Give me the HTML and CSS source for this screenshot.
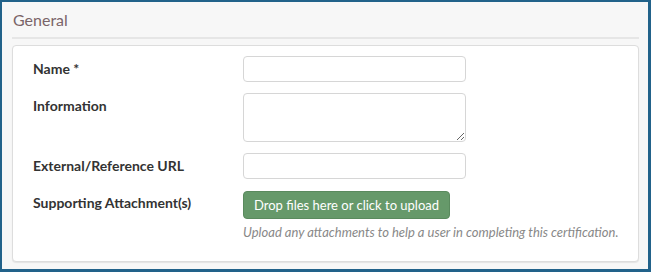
FILE: index.html
```html
<!DOCTYPE html>
<html lang="en">
<head>
    <meta charset="UTF-8">
    <title>General</title>
    <link rel="stylesheet" href="styles.css">
</head>
<body>
    <div class="frame">
        <!-- Section header -->
        <div class="section-title">General</div>

        <!-- Form card -->
        <div class="card">
            <div class="form-row">
                <label class="form-label">Name *</label>
                <input class="form-input" type="text">
            </div>
            <div class="form-row">
                <label class="form-label">Information</label>
                <textarea class="form-input form-textarea"></textarea>
            </div>
            <div class="form-row">
                <label class="form-label">External/Reference URL</label>
                <input class="form-input" type="text">
            </div>
            <div class="form-row">
                <label class="form-label">Supporting Attachment(s)</label>
                <div class="upload">
                    <button class="upload-btn">Drop files here or click to upload</button>
                    <p class="help-text">Upload any attachments to help a user in completing this certification.</p>
                </div>
            </div>
        </div>
    </div>
</body>
</html>
```

FILE: styles.css
```css
body {
    margin: 0;
    padding: 0;
    font-family: Lato, 'Noto Sans', sans-serif;
    background-color: #ffffff;
}

/* Outer frame */
.frame {
    width: 651px;
    height: 272px;
    box-sizing: border-box;
    border-style: solid;
    border-color: #22628a;
    border-width: 2px 3px 3px 2px;
    background-color: #f7f7f7;
    padding: 0 9px 0 10px;
}

/* Section header */
.section-title {
    color: #7a6468;
    font-size: 16px;
    height: 35px;
    line-height: 36px;
    padding-left: 1px;
    border-bottom: 2px solid #e6e6e6;
}

/* Card */
.card {
    background-color: #ffffff;
    border: 1px solid #dddddd;
    border-radius: 4px;
    box-shadow: 0 1px 1px rgba(0, 0, 0, 0.08);
    margin-top: 6px;
    height: 217px;
    box-sizing: border-box;
    padding: 10px 0 0 20px;
}

.form-row {
    display: flex;
    align-items: flex-start;
    margin-bottom: 11px;
}

.form-label {
    width: 210px;
    font-size: 14px;
    font-weight: bold;
    color: #333333;
    padding-top: 4px;
}

.form-input {
    width: 223px;
    height: 26px;
    box-sizing: border-box;
    border: 1px solid #d6d6d6;
    border-radius: 4px;
    margin: 0;
    font-family: inherit;
}

.form-textarea {
    height: 49px;
    resize: vertical;
    display: block;
}

/* Upload */
.upload {
    display: flex;
    flex-direction: column;
}

.upload-btn {
    align-self: flex-start;
    background-color: #66996a;
    color: #ffffff;
    border: 1px solid #5a8a5e;
    border-radius: 4px;
    font-family: inherit;
    font-size: 13px;
    height: 28px;
    padding: 0 10px;
    margin-top: 1px;
}

.help-text {
    margin: 5px 0 0 0;
    font-size: 13px;
    font-style: italic;
    color: #888888;
}
```
